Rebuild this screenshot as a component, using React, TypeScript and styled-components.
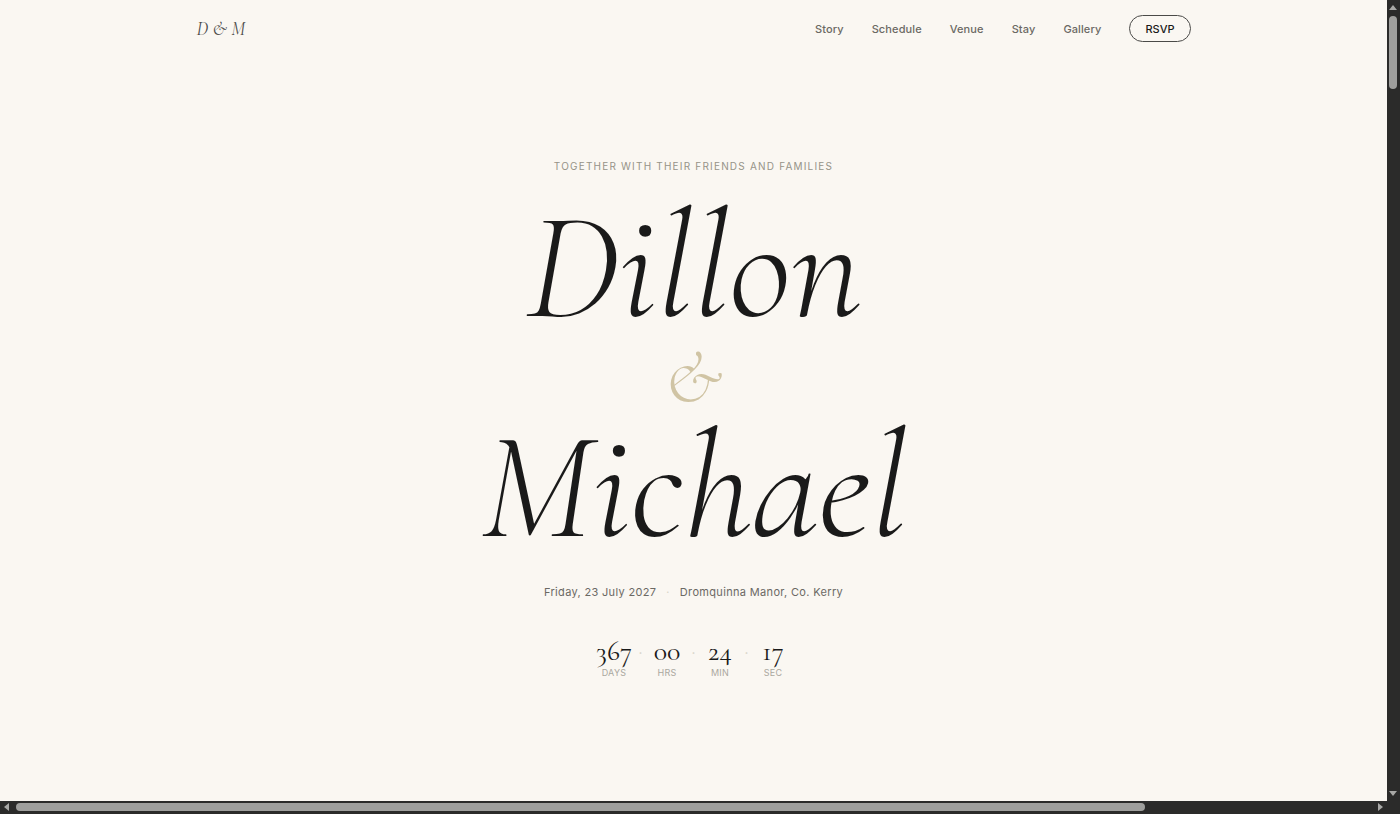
import React from "react";
import styled, { createGlobalStyle } from "styled-components";

const sans = `Inter, "Liberation Sans", sans-serif`;
const serif = `"Cormorant Garamond", "Liberation Serif", serif`;

const GlobalStyle = createGlobalStyle`
  *, *::before, *::after { box-sizing: border-box; }
  body {
    margin: 0;
    background: #faf7f2;
    color: #1a1a1a;
    font-family: ${sans};
  }
`;

const Frame = styled.div`
  display: grid;
  grid-template-columns: minmax(0, 1fr) 13px;
  grid-template-rows: 1fr 13px;
  min-height: 100vh;
  background: #2b2b2a;
`;

const Page = styled.div`
  display: flex;
  flex-direction: column;
  background: #faf7f2;
`;

const Header = styled.header`
  display: flex;
  align-items: center;
  justify-content: space-between;
  width: 100%;
  max-width: 1042px;
  height: 57px;
  margin: 0 auto;
  padding: 0 24px;
`;

const Monogram = styled.a`
  color: #4a4a48;
  font: italic 400 19px/24px ${serif};
  text-decoration: none;
`;

const Nav = styled.nav`
  display: flex;
  align-items: center;
  gap: 28px;
`;

const NavLink = styled.a`
  color: #6b6964;
  font-size: 11px;
  font-weight: 500;
  line-height: 16px;
  letter-spacing: 0.01em;
  text-decoration: none;
`;

const RsvpButton = styled.button`
  height: 27px;
  padding: 0 15px;
  border: 1px solid #4a4a48;
  border-radius: 14px;
  background: transparent;
  color: #1a1a1a;
  font: 500 11px/16px ${sans};
`;

const Hero = styled.main`
  display: flex;
  flex: 1;
  flex-direction: column;
  align-items: center;
  padding: 101px 24px 100px;
  text-align: center;
`;

const Eyebrow = styled.p`
  margin: 0;
  color: #969388;
  font-size: 10px;
  line-height: 16px;
  letter-spacing: 0.12em;
  text-transform: uppercase;
`;

const Names = styled.h1`
  display: flex;
  flex-direction: column;
  align-items: center;
  margin: 23px 0 0;
  font: italic 300 154px/140px ${serif};
`;

const Ampersand = styled.span`
  color: #d0c4a4;
  font-size: 76px;
  line-height: 80px;
`;

const Details = styled.p`
  display: flex;
  align-items: center;
  gap: 10px;
  margin: 25px 0 0;
  color: #6b6964;
  font-size: 11px;
  line-height: 20px;
  letter-spacing: 0.03em;
`;

const Dot = styled.span`
  color: #d8d4c8;
`;

const Countdown = styled.div`
  display: flex;
  margin-top: 35px;
`;

const Unit = styled.div`
  display: flex;
  flex-direction: column;
  align-items: center;
  gap: 2px;
  width: 36px;
`;

const Value = styled.span`
  font: 400 28px/28px ${serif};
`;

const Label = styled.span`
  color: #aaa79f;
  font-size: 9px;
  line-height: 12px;
  letter-spacing: 0.03em;
`;

const Separator = styled.span`
  width: 17px;
  color: #d8d4c8;
  font-size: 14px;
  line-height: 32px;
`;

const Scrollbar = styled.div<{ $axis: "x" | "y" }>`
  display: flex;
  flex-direction: ${({ $axis }) => ($axis === "x" ? "row" : "column")};
  align-items: center;
  justify-content: space-between;
  padding: ${({ $axis }) => ($axis === "x" ? "2px 4px 3px" : "5px 3px 5px 2px")};
`;

const Track = styled.div<{ $axis: "x" | "y" }>`
  display: flex;
  flex: 1;
  flex-direction: ${({ $axis }) => ($axis === "x" ? "row" : "column")};
  margin: ${({ $axis }) => ($axis === "x" ? "0 7px" : "6px 0")};
`;

const Thumb = styled.div<{ $axis: "x" | "y" }>`
  width: ${({ $axis }) => ($axis === "x" ? "calc(100% * 5 / 6)" : "8px")};
  height: ${({ $axis }) => ($axis === "x" ? "8px" : "73px")};
  border-radius: 4px;
  background: #9f9f9d;
`;

const arrows = {
  up: "M0 5 4 0 8 5Z",
  down: "M0 0 4 5 8 0Z",
  left: "M5 0 0 4 5 8Z",
  right: "M0 0 5 4 0 8Z",
};

function Arrow({ to }: { to: keyof typeof arrows }) {
  const vertical = to === "up" || to === "down";
  return (
    <svg width={vertical ? 8 : 5} height={vertical ? 5 : 8} fill="#a8a8a6">
      <path d={arrows[to]} />
    </svg>
  );
}

const links = ["Story", "Schedule", "Venue", "Stay", "Gallery"];

const countdown = [
  { value: "367", label: "DAYS" },
  { value: "00", label: "HRS" },
  { value: "24", label: "MIN" },
  { value: "17", label: "SEC" },
];

export default function App() {
  return (
    <Frame>
      <GlobalStyle />
      <Page>
        <Header>
          <Monogram href="#top">D &amp; M</Monogram>
          <Nav>
            {links.map((name) => (
              <NavLink key={name} href={`#${name.toLowerCase()}`}>
                {name}
              </NavLink>
            ))}
            <RsvpButton type="button">RSVP</RsvpButton>
          </Nav>
        </Header>
        <Hero>
          <Eyebrow>Together with their friends and families</Eyebrow>
          <Names>
            <span>Dillon</span>
            <Ampersand>&amp;</Ampersand>
            <span>Michael</span>
          </Names>
          <Details>
            <span>Friday, 23 July 2027</span>
            <Dot>·</Dot>
            <span>Dromquinna Manor, Co. Kerry</span>
          </Details>
          <Countdown>
            {countdown.map(({ value, label }, index) => (
              <React.Fragment key={label}>
                {index > 0 && <Separator>·</Separator>}
                <Unit>
                  <Value>{value}</Value>
                  <Label>{label}</Label>
                </Unit>
              </React.Fragment>
            ))}
          </Countdown>
        </Hero>
      </Page>
      <Scrollbar $axis="y" aria-hidden>
        <Arrow to="up" />
        <Track $axis="y">
          <Thumb $axis="y" />
        </Track>
        <Arrow to="down" />
      </Scrollbar>
      <Scrollbar $axis="x" aria-hidden>
        <Arrow to="left" />
        <Track $axis="x">
          <Thumb $axis="x" />
        </Track>
        <Arrow to="right" />
      </Scrollbar>
    </Frame>
  );
}
